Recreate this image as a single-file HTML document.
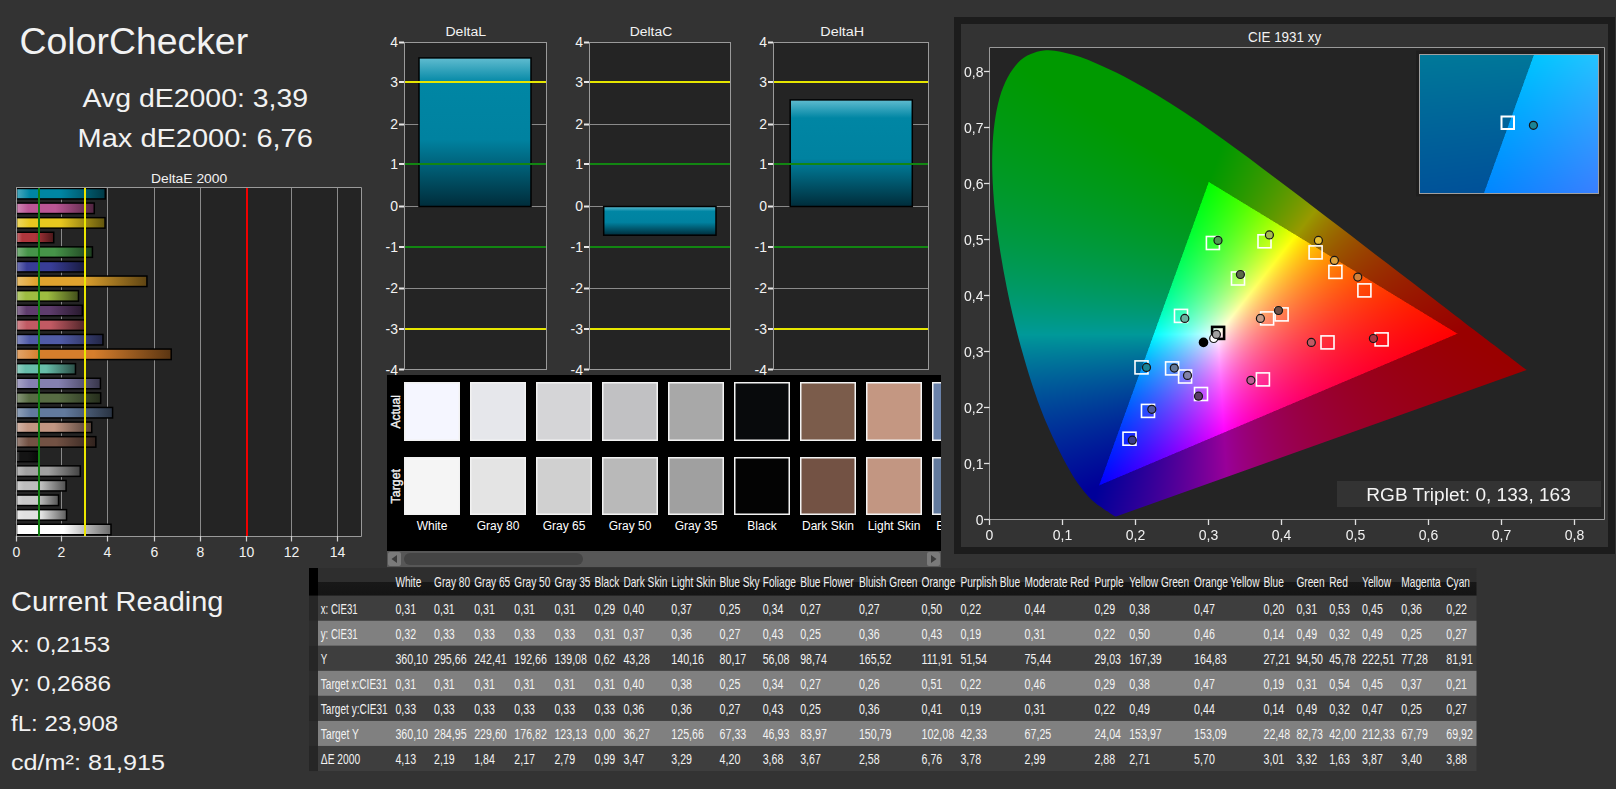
<!DOCTYPE html>
<html><head><meta charset="utf-8"><style>
html,body{margin:0;padding:0;width:1616px;height:789px;overflow:hidden;background:#333;}
svg{position:absolute;left:0;top:0;}
svg text{font-family:"Liberation Sans", sans-serif;}
canvas{position:absolute;}
</style></head><body>
<svg width="1616" height="789" viewBox="0 0 1616 789" style="z-index:0"><defs><linearGradient id="bg0" x1="0" y1="0" x2="1" y2="0"><stop offset="0" stop-color="#4caabf"/><stop offset="0.15" stop-color="#0085a3"/><stop offset="0.5" stop-color="#0085a3"/><stop offset="1" stop-color="#003844"/></linearGradient><linearGradient id="bg1" x1="0" y1="0" x2="1" y2="0"><stop offset="0" stop-color="#cf89b5"/><stop offset="0.15" stop-color="#bb5695"/><stop offset="0.5" stop-color="#bb5695"/><stop offset="1" stop-color="#4f243f"/></linearGradient><linearGradient id="bg2" x1="0" y1="0" x2="1" y2="0"><stop offset="0" stop-color="#eed862"/><stop offset="0.15" stop-color="#e7c71f"/><stop offset="0.5" stop-color="#e7c71f"/><stop offset="1" stop-color="#61540d"/></linearGradient><linearGradient id="bg3" x1="0" y1="0" x2="1" y2="0"><stop offset="0" stop-color="#c77276"/><stop offset="0.15" stop-color="#af363c"/><stop offset="0.5" stop-color="#af363c"/><stop offset="1" stop-color="#4a1719"/></linearGradient><linearGradient id="bg4" x1="0" y1="0" x2="1" y2="0"><stop offset="0" stop-color="#7eb480"/><stop offset="0.15" stop-color="#469449"/><stop offset="0.5" stop-color="#469449"/><stop offset="1" stop-color="#1d3e1f"/></linearGradient><linearGradient id="bg5" x1="0" y1="0" x2="1" y2="0"><stop offset="0" stop-color="#7477b6"/><stop offset="0.15" stop-color="#383d96"/><stop offset="0.5" stop-color="#383d96"/><stop offset="1" stop-color="#181a3f"/></linearGradient><linearGradient id="bg6" x1="0" y1="0" x2="1" y2="0"><stop offset="0" stop-color="#e9bf6d"/><stop offset="0.15" stop-color="#e0a32e"/><stop offset="0.5" stop-color="#e0a32e"/><stop offset="1" stop-color="#5e4413"/></linearGradient><linearGradient id="bg7" x1="0" y1="0" x2="1" y2="0"><stop offset="0" stop-color="#bad079"/><stop offset="0.15" stop-color="#9dbc40"/><stop offset="0.5" stop-color="#9dbc40"/><stop offset="1" stop-color="#424f1b"/></linearGradient><linearGradient id="bg8" x1="0" y1="0" x2="1" y2="0"><stop offset="0" stop-color="#8e7698"/><stop offset="0.15" stop-color="#5e3c6c"/><stop offset="0.5" stop-color="#5e3c6c"/><stop offset="1" stop-color="#27192d"/></linearGradient><linearGradient id="bg9" x1="0" y1="0" x2="1" y2="0"><stop offset="0" stop-color="#d48c92"/><stop offset="0.15" stop-color="#c15a63"/><stop offset="0.5" stop-color="#c15a63"/><stop offset="1" stop-color="#51262a"/></linearGradient><linearGradient id="bg10" x1="0" y1="0" x2="1" y2="0"><stop offset="0" stop-color="#848cc1"/><stop offset="0.15" stop-color="#505ba6"/><stop offset="0.5" stop-color="#505ba6"/><stop offset="1" stop-color="#222646"/></linearGradient><linearGradient id="bg11" x1="0" y1="0" x2="1" y2="0"><stop offset="0" stop-color="#e2a56b"/><stop offset="0.15" stop-color="#d67e2c"/><stop offset="0.5" stop-color="#d67e2c"/><stop offset="1" stop-color="#5a3512"/></linearGradient><linearGradient id="bg12" x1="0" y1="0" x2="1" y2="0"><stop offset="0" stop-color="#95d1c4"/><stop offset="0.15" stop-color="#67bdaa"/><stop offset="0.5" stop-color="#67bdaa"/><stop offset="1" stop-color="#2b4f47"/></linearGradient><linearGradient id="bg13" x1="0" y1="0" x2="1" y2="0"><stop offset="0" stop-color="#aaa6c8"/><stop offset="0.15" stop-color="#8580b1"/><stop offset="0.5" stop-color="#8580b1"/><stop offset="1" stop-color="#38364a"/></linearGradient><linearGradient id="bg14" x1="0" y1="0" x2="1" y2="0"><stop offset="0" stop-color="#89987b"/><stop offset="0.15" stop-color="#576c43"/><stop offset="0.5" stop-color="#576c43"/><stop offset="1" stop-color="#252d1c"/></linearGradient><linearGradient id="bg15" x1="0" y1="0" x2="1" y2="0"><stop offset="0" stop-color="#91a2ba"/><stop offset="0.15" stop-color="#627a9d"/><stop offset="0.5" stop-color="#627a9d"/><stop offset="1" stop-color="#293342"/></linearGradient><linearGradient id="bg16" x1="0" y1="0" x2="1" y2="0"><stop offset="0" stop-color="#d4b6a8"/><stop offset="0.15" stop-color="#c29682"/><stop offset="0.5" stop-color="#c29682"/><stop offset="1" stop-color="#513f37"/></linearGradient><linearGradient id="bg17" x1="0" y1="0" x2="1" y2="0"><stop offset="0" stop-color="#9d867c"/><stop offset="0.15" stop-color="#735244"/><stop offset="0.5" stop-color="#735244"/><stop offset="1" stop-color="#30221d"/></linearGradient><linearGradient id="bg18" x1="0" y1="0" x2="1" y2="0"><stop offset="0" stop-color="#5a5a5a"/><stop offset="0.15" stop-color="#141414"/><stop offset="0.5" stop-color="#141414"/><stop offset="1" stop-color="#080808"/></linearGradient><linearGradient id="bg19" x1="0" y1="0" x2="1" y2="0"><stop offset="0" stop-color="#bcbcbc"/><stop offset="0.15" stop-color="#a0a0a0"/><stop offset="0.5" stop-color="#a0a0a0"/><stop offset="1" stop-color="#434343"/></linearGradient><linearGradient id="bg20" x1="0" y1="0" x2="1" y2="0"><stop offset="0" stop-color="#d2d2d2"/><stop offset="0.15" stop-color="#bebebe"/><stop offset="0.5" stop-color="#bebebe"/><stop offset="1" stop-color="#505050"/></linearGradient><linearGradient id="bg21" x1="0" y1="0" x2="1" y2="0"><stop offset="0" stop-color="#d8d8d8"/><stop offset="0.15" stop-color="#c8c8c8"/><stop offset="0.5" stop-color="#c8c8c8"/><stop offset="1" stop-color="#545454"/></linearGradient><linearGradient id="bg22" x1="0" y1="0" x2="1" y2="0"><stop offset="0" stop-color="#eaeaea"/><stop offset="0.15" stop-color="#e1e1e1"/><stop offset="0.5" stop-color="#e1e1e1"/><stop offset="1" stop-color="#5e5e5e"/></linearGradient><linearGradient id="bg23" x1="0" y1="0" x2="1" y2="0"><stop offset="0" stop-color="#ffffff"/><stop offset="0.15" stop-color="#ffffff"/><stop offset="0.5" stop-color="#ffffff"/><stop offset="1" stop-color="#6b6b6b"/></linearGradient><linearGradient id="vbar" x1="0" y1="0" x2="0" y2="1"><stop offset="0" stop-color="#60bcd0"/><stop offset="0.17" stop-color="#0086a4"/><stop offset="0.55" stop-color="#0082a0"/><stop offset="1" stop-color="#002c3a"/></linearGradient><clipPath id="swclip"><rect x="387" y="375" width="554" height="176"/></clipPath><linearGradient id="hdr" x1="0" y1="0" x2="0" y2="1"><stop offset="0" stop-color="#2e2e2e"/><stop offset="0.5" stop-color="#2e2e2e"/><stop offset="0.5" stop-color="#181818"/><stop offset="1" stop-color="#141414"/></linearGradient><linearGradient id="fbg" x1="0" y1="0" x2="0" y2="1"><stop offset="0" stop-color="#009900"/><stop offset="0.45" stop-color="#009950"/><stop offset="0.6" stop-color="#009696"/><stop offset="0.8" stop-color="#003c99"/><stop offset="1" stop-color="#0a0099"/></linearGradient><linearGradient id="fbr" gradientUnits="userSpaceOnUse" x1="1230.7" y1="0" x2="1523.1" y2="0"><stop offset="0" stop-color="#990000" stop-opacity="0"/><stop offset="0.6" stop-color="#990000" stop-opacity="0.8"/><stop offset="1" stop-color="#990000" stop-opacity="1"/></linearGradient><linearGradient id="ftr" gradientUnits="userSpaceOnUse" x1="1457.3" y1="333.7" x2="1245.0" y2="333.7"><stop offset="0" stop-color="#ff0a0a" stop-opacity="1"/><stop offset="1" stop-color="#ff0a0a" stop-opacity="0"/></linearGradient><linearGradient id="ftg" gradientUnits="userSpaceOnUse" x1="1208.8" y1="182.0" x2="1257.4" y2="341.3"><stop offset="0" stop-color="#20ff00" stop-opacity="1"/><stop offset="1" stop-color="#20ff00" stop-opacity="0"/></linearGradient><linearGradient id="ftb" gradientUnits="userSpaceOnUse" x1="1099.2" y1="485.4" x2="1262.9" y2="326.1"><stop offset="0" stop-color="#0a20ff" stop-opacity="1"/><stop offset="1" stop-color="#0a20ff" stop-opacity="0"/></linearGradient></defs>
<rect x="0" y="0" width="1616" height="789" fill="#333333"/>
<text x="19.6" y="53.5" font-size="37" text-anchor="start" fill="#f2f2f2" textLength="228.5" lengthAdjust="spacingAndGlyphs">ColorChecker</text>
<text x="82.5" y="107.2" font-size="26.5" text-anchor="start" fill="#f2f2f2" textLength="225.6" lengthAdjust="spacingAndGlyphs">Avg dE2000: 3,39</text>
<text x="77.6" y="147.4" font-size="26.5" text-anchor="start" fill="#f2f2f2" textLength="235.2" lengthAdjust="spacingAndGlyphs">Max dE2000: 6,76</text>
<text x="11" y="611.3" font-size="27.4" text-anchor="start" fill="#f2f2f2" textLength="212.4" lengthAdjust="spacingAndGlyphs">Current Reading</text>
<text x="11" y="651.7" font-size="22" text-anchor="start" fill="#f2f2f2" textLength="99.2" lengthAdjust="spacingAndGlyphs">x: 0,2153</text>
<text x="11" y="691.4" font-size="22" text-anchor="start" fill="#f2f2f2" textLength="99.9" lengthAdjust="spacingAndGlyphs">y: 0,2686</text>
<text x="11" y="731.4" font-size="22" text-anchor="start" fill="#f2f2f2" textLength="107.2" lengthAdjust="spacingAndGlyphs">fL: 23,908</text>
<text x="11" y="770" font-size="22" text-anchor="start" fill="#f2f2f2" textLength="153.9" lengthAdjust="spacingAndGlyphs">cd/m²: 81,915</text>
<text x="151" y="182.9" font-size="13.7" text-anchor="start" fill="#f2f2f2" textLength="76.2" lengthAdjust="spacingAndGlyphs">DeltaE 2000</text>
<rect x="16.5" y="187.5" width="345" height="349" fill="#242424"/>
<line x1="61.5" y1="188" x2="61.5" y2="536" stroke="#8a8a8a" stroke-width="1"/>
<line x1="107.5" y1="188" x2="107.5" y2="536" stroke="#8a8a8a" stroke-width="1"/>
<line x1="154.5" y1="188" x2="154.5" y2="536" stroke="#8a8a8a" stroke-width="1"/>
<line x1="200.5" y1="188" x2="200.5" y2="536" stroke="#8a8a8a" stroke-width="1"/>
<line x1="291.5" y1="188" x2="291.5" y2="536" stroke="#8a8a8a" stroke-width="1"/>
<line x1="337.5" y1="188" x2="337.5" y2="536" stroke="#8a8a8a" stroke-width="1"/>
<rect x="16.5" y="188.45" width="88.75" height="10.5" fill="url(#bg0)" stroke="#000" stroke-width="1.5"/>
<rect x="16.5" y="203.05" width="77.76" height="10.5" fill="url(#bg1)" stroke="#000" stroke-width="1.5"/>
<rect x="16.5" y="217.65" width="88.52" height="10.5" fill="url(#bg2)" stroke="#000" stroke-width="1.5"/>
<rect x="16.5" y="232.25" width="37.23" height="10.5" fill="url(#bg3)" stroke="#000" stroke-width="1.5"/>
<rect x="16.5" y="246.85" width="75.93" height="10.5" fill="url(#bg4)" stroke="#000" stroke-width="1.5"/>
<rect x="16.5" y="261.45" width="68.83" height="10.5" fill="url(#bg5)" stroke="#000" stroke-width="1.5"/>
<rect x="16.5" y="276.05" width="130.43" height="10.5" fill="url(#bg6)" stroke="#000" stroke-width="1.5"/>
<rect x="16.5" y="290.65" width="61.96" height="10.5" fill="url(#bg7)" stroke="#000" stroke-width="1.5"/>
<rect x="16.5" y="305.25" width="65.85" height="10.5" fill="url(#bg8)" stroke="#000" stroke-width="1.5"/>
<rect x="16.5" y="319.85" width="68.37" height="10.5" fill="url(#bg9)" stroke="#000" stroke-width="1.5"/>
<rect x="16.5" y="334.45" width="86.46" height="10.5" fill="url(#bg10)" stroke="#000" stroke-width="1.5"/>
<rect x="16.5" y="349.05" width="154.70" height="10.5" fill="url(#bg11)" stroke="#000" stroke-width="1.5"/>
<rect x="16.5" y="363.65" width="58.98" height="10.5" fill="url(#bg12)" stroke="#000" stroke-width="1.5"/>
<rect x="16.5" y="378.25" width="83.94" height="10.5" fill="url(#bg13)" stroke="#000" stroke-width="1.5"/>
<rect x="16.5" y="392.85" width="84.17" height="10.5" fill="url(#bg14)" stroke="#000" stroke-width="1.5"/>
<rect x="16.5" y="407.45" width="96.08" height="10.5" fill="url(#bg15)" stroke="#000" stroke-width="1.5"/>
<rect x="16.5" y="422.05" width="75.24" height="10.5" fill="url(#bg16)" stroke="#000" stroke-width="1.5"/>
<rect x="16.5" y="436.65" width="79.36" height="10.5" fill="url(#bg17)" stroke="#000" stroke-width="1.5"/>
<rect x="16.5" y="451.25" width="22.57" height="10.5" fill="url(#bg18)" stroke="#000" stroke-width="1.5"/>
<rect x="16.5" y="465.85" width="63.79" height="10.5" fill="url(#bg19)" stroke="#000" stroke-width="1.5"/>
<rect x="16.5" y="480.45" width="49.59" height="10.5" fill="url(#bg20)" stroke="#000" stroke-width="1.5"/>
<rect x="16.5" y="495.05" width="42.04" height="10.5" fill="url(#bg21)" stroke="#000" stroke-width="1.5"/>
<rect x="16.5" y="509.65" width="50.05" height="10.5" fill="url(#bg22)" stroke="#000" stroke-width="1.5"/>
<rect x="16.5" y="524.25" width="94.48" height="10.5" fill="url(#bg23)" stroke="#000" stroke-width="1.5"/>
<path d="M16 187.5H361.5V536.5M16.5 187V541M16 536.5H361.5" fill="none" stroke="#9a9a9a" stroke-width="1"/>
<line x1="39" y1="188" x2="39" y2="536" stroke="#128012" stroke-width="2"/>
<line x1="85" y1="188" x2="85" y2="536" stroke="#ebe600" stroke-width="2"/>
<line x1="247" y1="188" x2="247" y2="536" stroke="#f00000" stroke-width="2"/>
<line x1="16.5" y1="536" x2="16.5" y2="541.5" stroke="#d0d0d0" stroke-width="1.2"/>
<text x="16.5" y="557" font-size="14" text-anchor="middle" fill="#f2f2f2">0</text>
<line x1="61.5" y1="536" x2="61.5" y2="541.5" stroke="#d0d0d0" stroke-width="1.2"/>
<text x="61.5" y="557" font-size="14" text-anchor="middle" fill="#f2f2f2">2</text>
<line x1="107.5" y1="536" x2="107.5" y2="541.5" stroke="#d0d0d0" stroke-width="1.2"/>
<text x="107.5" y="557" font-size="14" text-anchor="middle" fill="#f2f2f2">4</text>
<line x1="154.5" y1="536" x2="154.5" y2="541.5" stroke="#d0d0d0" stroke-width="1.2"/>
<text x="154.5" y="557" font-size="14" text-anchor="middle" fill="#f2f2f2">6</text>
<line x1="200.5" y1="536" x2="200.5" y2="541.5" stroke="#d0d0d0" stroke-width="1.2"/>
<text x="200.5" y="557" font-size="14" text-anchor="middle" fill="#f2f2f2">8</text>
<line x1="246.5" y1="536" x2="246.5" y2="541.5" stroke="#d0d0d0" stroke-width="1.2"/>
<text x="246.5" y="557" font-size="14" text-anchor="middle" fill="#f2f2f2">10</text>
<line x1="291.5" y1="536" x2="291.5" y2="541.5" stroke="#d0d0d0" stroke-width="1.2"/>
<text x="291.5" y="557" font-size="14" text-anchor="middle" fill="#f2f2f2">12</text>
<line x1="337.5" y1="536" x2="337.5" y2="541.5" stroke="#d0d0d0" stroke-width="1.2"/>
<text x="337.5" y="557" font-size="14" text-anchor="middle" fill="#f2f2f2">14</text>
<text x="445.40000000000003" y="36" font-size="13.7" text-anchor="start" fill="#f2f2f2" textLength="40.7" lengthAdjust="spacingAndGlyphs">DeltaL</text>
<rect x="404.5" y="42.5" width="142" height="327" fill="#242424"/>
<line x1="404" y1="124.5" x2="546" y2="124.5" stroke="#8a8a8a" stroke-width="1"/>
<line x1="404" y1="206.5" x2="546" y2="206.5" stroke="#8a8a8a" stroke-width="1"/>
<line x1="404" y1="288.5" x2="546" y2="288.5" stroke="#8a8a8a" stroke-width="1"/>
<rect x="419" y="57.9" width="112" height="148.6" fill="url(#vbar)" stroke="#000" stroke-width="1.5"/>
<line x1="404" y1="82" x2="546" y2="82" stroke="#e6e600" stroke-width="2"/>
<line x1="404" y1="164" x2="546" y2="164" stroke="#128612" stroke-width="2"/>
<line x1="404" y1="247" x2="546" y2="247" stroke="#128612" stroke-width="2"/>
<line x1="404" y1="329" x2="546" y2="329" stroke="#e6e600" stroke-width="2"/>
<rect x="404.5" y="42.5" width="142" height="327" fill="none" stroke="#9a9a9a" stroke-width="1"/>
<line x1="399" y1="369.5" x2="404" y2="369.5" stroke="#e8e8e8" stroke-width="2"/>
<text x="398" y="375" font-size="14" text-anchor="end" fill="#f2f2f2">-4</text>
<line x1="399" y1="329" x2="404" y2="329" stroke="#e8e8e8" stroke-width="2"/>
<text x="398" y="334" font-size="14" text-anchor="end" fill="#f2f2f2">-3</text>
<line x1="399" y1="288.5" x2="404" y2="288.5" stroke="#e8e8e8" stroke-width="2"/>
<text x="398" y="293" font-size="14" text-anchor="end" fill="#f2f2f2">-2</text>
<line x1="399" y1="247" x2="404" y2="247" stroke="#e8e8e8" stroke-width="2"/>
<text x="398" y="252" font-size="14" text-anchor="end" fill="#f2f2f2">-1</text>
<line x1="399" y1="206.5" x2="404" y2="206.5" stroke="#e8e8e8" stroke-width="2"/>
<text x="398" y="211" font-size="14" text-anchor="end" fill="#f2f2f2">0</text>
<line x1="399" y1="164" x2="404" y2="164" stroke="#e8e8e8" stroke-width="2"/>
<text x="398" y="169" font-size="14" text-anchor="end" fill="#f2f2f2">1</text>
<line x1="399" y1="124.5" x2="404" y2="124.5" stroke="#e8e8e8" stroke-width="2"/>
<text x="398" y="129" font-size="14" text-anchor="end" fill="#f2f2f2">2</text>
<line x1="399" y1="82" x2="404" y2="82" stroke="#e8e8e8" stroke-width="2"/>
<text x="398" y="87" font-size="14" text-anchor="end" fill="#f2f2f2">3</text>
<line x1="399" y1="42.5" x2="404" y2="42.5" stroke="#e8e8e8" stroke-width="2"/>
<text x="398" y="47" font-size="14" text-anchor="end" fill="#f2f2f2">4</text>
<text x="629.8" y="36" font-size="13.7" text-anchor="start" fill="#f2f2f2" textLength="42.4" lengthAdjust="spacingAndGlyphs">DeltaC</text>
<rect x="589.5" y="42.5" width="141" height="327" fill="#242424"/>
<line x1="589" y1="124.5" x2="730" y2="124.5" stroke="#8a8a8a" stroke-width="1"/>
<line x1="589" y1="206.5" x2="730" y2="206.5" stroke="#8a8a8a" stroke-width="1"/>
<line x1="589" y1="288.5" x2="730" y2="288.5" stroke="#8a8a8a" stroke-width="1"/>
<rect x="603.7" y="206.5" width="112.29999999999995" height="28.7" fill="url(#vbar)" stroke="#000" stroke-width="1.5"/>
<line x1="589" y1="82" x2="730" y2="82" stroke="#e6e600" stroke-width="2"/>
<line x1="589" y1="164" x2="730" y2="164" stroke="#128612" stroke-width="2"/>
<line x1="589" y1="247" x2="730" y2="247" stroke="#128612" stroke-width="2"/>
<line x1="589" y1="329" x2="730" y2="329" stroke="#e6e600" stroke-width="2"/>
<rect x="589.5" y="42.5" width="141" height="327" fill="none" stroke="#9a9a9a" stroke-width="1"/>
<line x1="584" y1="369.5" x2="589" y2="369.5" stroke="#e8e8e8" stroke-width="2"/>
<text x="583" y="375" font-size="14" text-anchor="end" fill="#f2f2f2">-4</text>
<line x1="584" y1="329" x2="589" y2="329" stroke="#e8e8e8" stroke-width="2"/>
<text x="583" y="334" font-size="14" text-anchor="end" fill="#f2f2f2">-3</text>
<line x1="584" y1="288.5" x2="589" y2="288.5" stroke="#e8e8e8" stroke-width="2"/>
<text x="583" y="293" font-size="14" text-anchor="end" fill="#f2f2f2">-2</text>
<line x1="584" y1="247" x2="589" y2="247" stroke="#e8e8e8" stroke-width="2"/>
<text x="583" y="252" font-size="14" text-anchor="end" fill="#f2f2f2">-1</text>
<line x1="584" y1="206.5" x2="589" y2="206.5" stroke="#e8e8e8" stroke-width="2"/>
<text x="583" y="211" font-size="14" text-anchor="end" fill="#f2f2f2">0</text>
<line x1="584" y1="164" x2="589" y2="164" stroke="#e8e8e8" stroke-width="2"/>
<text x="583" y="169" font-size="14" text-anchor="end" fill="#f2f2f2">1</text>
<line x1="584" y1="124.5" x2="589" y2="124.5" stroke="#e8e8e8" stroke-width="2"/>
<text x="583" y="129" font-size="14" text-anchor="end" fill="#f2f2f2">2</text>
<line x1="584" y1="82" x2="589" y2="82" stroke="#e8e8e8" stroke-width="2"/>
<text x="583" y="87" font-size="14" text-anchor="end" fill="#f2f2f2">3</text>
<line x1="584" y1="42.5" x2="589" y2="42.5" stroke="#e8e8e8" stroke-width="2"/>
<text x="583" y="47" font-size="14" text-anchor="end" fill="#f2f2f2">4</text>
<text x="820.3" y="36" font-size="13.7" text-anchor="start" fill="#f2f2f2" textLength="43.9" lengthAdjust="spacingAndGlyphs">DeltaH</text>
<rect x="773.5" y="42.5" width="155" height="327" fill="#242424"/>
<line x1="773" y1="124.5" x2="928" y2="124.5" stroke="#8a8a8a" stroke-width="1"/>
<line x1="773" y1="206.5" x2="928" y2="206.5" stroke="#8a8a8a" stroke-width="1"/>
<line x1="773" y1="288.5" x2="928" y2="288.5" stroke="#8a8a8a" stroke-width="1"/>
<rect x="790.2" y="99.9" width="122.09999999999991" height="106.6" fill="url(#vbar)" stroke="#000" stroke-width="1.5"/>
<line x1="773" y1="82" x2="928" y2="82" stroke="#e6e600" stroke-width="2"/>
<line x1="773" y1="164" x2="928" y2="164" stroke="#128612" stroke-width="2"/>
<line x1="773" y1="247" x2="928" y2="247" stroke="#128612" stroke-width="2"/>
<line x1="773" y1="329" x2="928" y2="329" stroke="#e6e600" stroke-width="2"/>
<rect x="773.5" y="42.5" width="155" height="327" fill="none" stroke="#9a9a9a" stroke-width="1"/>
<line x1="768" y1="369.5" x2="773" y2="369.5" stroke="#e8e8e8" stroke-width="2"/>
<text x="767" y="375" font-size="14" text-anchor="end" fill="#f2f2f2">-4</text>
<line x1="768" y1="329" x2="773" y2="329" stroke="#e8e8e8" stroke-width="2"/>
<text x="767" y="334" font-size="14" text-anchor="end" fill="#f2f2f2">-3</text>
<line x1="768" y1="288.5" x2="773" y2="288.5" stroke="#e8e8e8" stroke-width="2"/>
<text x="767" y="293" font-size="14" text-anchor="end" fill="#f2f2f2">-2</text>
<line x1="768" y1="247" x2="773" y2="247" stroke="#e8e8e8" stroke-width="2"/>
<text x="767" y="252" font-size="14" text-anchor="end" fill="#f2f2f2">-1</text>
<line x1="768" y1="206.5" x2="773" y2="206.5" stroke="#e8e8e8" stroke-width="2"/>
<text x="767" y="211" font-size="14" text-anchor="end" fill="#f2f2f2">0</text>
<line x1="768" y1="164" x2="773" y2="164" stroke="#e8e8e8" stroke-width="2"/>
<text x="767" y="169" font-size="14" text-anchor="end" fill="#f2f2f2">1</text>
<line x1="768" y1="124.5" x2="773" y2="124.5" stroke="#e8e8e8" stroke-width="2"/>
<text x="767" y="129" font-size="14" text-anchor="end" fill="#f2f2f2">2</text>
<line x1="768" y1="82" x2="773" y2="82" stroke="#e8e8e8" stroke-width="2"/>
<text x="767" y="87" font-size="14" text-anchor="end" fill="#f2f2f2">3</text>
<line x1="768" y1="42.5" x2="773" y2="42.5" stroke="#e8e8e8" stroke-width="2"/>
<text x="767" y="47" font-size="14" text-anchor="end" fill="#f2f2f2">4</text>
<rect x="387" y="375" width="554" height="176" fill="#000"/>
<g clip-path="url(#swclip)">
<rect x="404.75" y="382.75" width="54.5" height="57.5" fill="#f5f6ff" stroke="#f2f2f2" stroke-width="1.5"/>
<rect x="404.75" y="457.75" width="54.5" height="56.5" fill="#f5f5f5" stroke="#f2f2f2" stroke-width="1.5"/>
<text x="432" y="530" font-size="12" text-anchor="middle" fill="#ffffff">White</text>
<rect x="470.75" y="382.75" width="54.5" height="57.5" fill="#e6e7eb" stroke="#f2f2f2" stroke-width="1.5"/>
<rect x="470.75" y="457.75" width="54.5" height="56.5" fill="#e4e4e4" stroke="#f2f2f2" stroke-width="1.5"/>
<text x="498" y="530" font-size="12" text-anchor="middle" fill="#ffffff">Gray 80</text>
<rect x="536.75" y="382.75" width="54.5" height="57.5" fill="#d5d5d7" stroke="#f2f2f2" stroke-width="1.5"/>
<rect x="536.75" y="457.75" width="54.5" height="56.5" fill="#d0d0d0" stroke="#f2f2f2" stroke-width="1.5"/>
<text x="564" y="530" font-size="12" text-anchor="middle" fill="#ffffff">Gray 65</text>
<rect x="602.75" y="382.75" width="54.5" height="57.5" fill="#c1c1c3" stroke="#f2f2f2" stroke-width="1.5"/>
<rect x="602.75" y="457.75" width="54.5" height="56.5" fill="#b9b9b9" stroke="#f2f2f2" stroke-width="1.5"/>
<text x="630" y="530" font-size="12" text-anchor="middle" fill="#ffffff">Gray 50</text>
<rect x="668.75" y="382.75" width="54.5" height="57.5" fill="#a8a8a8" stroke="#f2f2f2" stroke-width="1.5"/>
<rect x="668.75" y="457.75" width="54.5" height="56.5" fill="#a0a0a0" stroke="#f2f2f2" stroke-width="1.5"/>
<text x="696" y="530" font-size="12" text-anchor="middle" fill="#ffffff">Gray 35</text>
<rect x="734.75" y="382.75" width="54.5" height="57.5" fill="#080a0c" stroke="#f2f2f2" stroke-width="1.5"/>
<rect x="734.75" y="457.75" width="54.5" height="56.5" fill="#030303" stroke="#f2f2f2" stroke-width="1.5"/>
<text x="762" y="530" font-size="12" text-anchor="middle" fill="#ffffff">Black</text>
<rect x="800.75" y="382.75" width="54.5" height="57.5" fill="#7b5c4b" stroke="#f2f2f2" stroke-width="1.5"/>
<rect x="800.75" y="457.75" width="54.5" height="56.5" fill="#735244" stroke="#f2f2f2" stroke-width="1.5"/>
<text x="828" y="530" font-size="12" text-anchor="middle" fill="#ffffff">Dark Skin</text>
<rect x="866.75" y="382.75" width="54.5" height="57.5" fill="#c49782" stroke="#f2f2f2" stroke-width="1.5"/>
<rect x="866.75" y="457.75" width="54.5" height="56.5" fill="#c29682" stroke="#f2f2f2" stroke-width="1.5"/>
<text x="894" y="530" font-size="12" text-anchor="middle" fill="#ffffff">Light Skin</text>
<rect x="932.75" y="382.75" width="54.5" height="57.5" fill="#6a82aa" stroke="#f2f2f2" stroke-width="1.5"/>
<rect x="932.75" y="457.75" width="54.5" height="56.5" fill="#627a9d" stroke="#f2f2f2" stroke-width="1.5"/>
<text x="960" y="530" font-size="12" text-anchor="middle" fill="#ffffff">Blue Sky</text>
</g>
<text transform="translate(399.8,428.6) rotate(-90)" font-size="12.4" fill="#f4f4f4" stroke="#f4f4f4" stroke-width="0.35" textLength="33.6" lengthAdjust="spacingAndGlyphs">Actual</text>
<text transform="translate(399.8,503.4) rotate(-90)" font-size="12.4" fill="#f4f4f4" stroke="#f4f4f4" stroke-width="0.35" textLength="34.4" lengthAdjust="spacingAndGlyphs">Target</text>
<rect x="387" y="551" width="554" height="16" fill="#575757"/>
<rect x="388" y="552" width="13" height="14" rx="2" fill="#7a7a7a"/>
<path d="M391.5 559 L397 555 V563 Z" fill="#3c3c3c"/>
<rect x="927" y="552" width="13" height="14" rx="2" fill="#7a7a7a"/>
<path d="M936.5 559 L931 555 V563 Z" fill="#3c3c3c"/>
<rect x="404" y="553" width="179" height="12" rx="6" fill="#444444"/>
<rect x="309" y="568" width="1167.5" height="27.7" fill="url(#hdr)"/>
<rect x="309" y="568" width="9" height="27.7" fill="#000"/>
<text transform="translate(395.4,587) scale(0.73,1)" font-size="13.9" fill="#f2f2f2">White</text>
<text transform="translate(434,587) scale(0.73,1)" font-size="13.9" fill="#f2f2f2">Gray 80</text>
<text transform="translate(474.2,587) scale(0.73,1)" font-size="13.9" fill="#f2f2f2">Gray 65</text>
<text transform="translate(514.3,587) scale(0.73,1)" font-size="13.9" fill="#f2f2f2">Gray 50</text>
<text transform="translate(554.4,587) scale(0.73,1)" font-size="13.9" fill="#f2f2f2">Gray 35</text>
<text transform="translate(594.5,587) scale(0.73,1)" font-size="13.9" fill="#f2f2f2">Black</text>
<text transform="translate(623.4,587) scale(0.73,1)" font-size="13.9" fill="#f2f2f2">Dark Skin</text>
<text transform="translate(671.3,587) scale(0.73,1)" font-size="13.9" fill="#f2f2f2">Light Skin</text>
<text transform="translate(719.6,587) scale(0.73,1)" font-size="13.9" fill="#f2f2f2">Blue Sky</text>
<text transform="translate(762.7,587) scale(0.73,1)" font-size="13.9" fill="#f2f2f2">Foliage</text>
<text transform="translate(800.2,587) scale(0.73,1)" font-size="13.9" fill="#f2f2f2">Blue Flower</text>
<text transform="translate(858.9,587) scale(0.73,1)" font-size="13.9" fill="#f2f2f2">Bluish Green</text>
<text transform="translate(921.5,587) scale(0.73,1)" font-size="13.9" fill="#f2f2f2">Orange</text>
<text transform="translate(960.4,587) scale(0.73,1)" font-size="13.9" fill="#f2f2f2">Purplish Blue</text>
<text transform="translate(1024.6,587) scale(0.73,1)" font-size="13.9" fill="#f2f2f2">Moderate Red</text>
<text transform="translate(1094.4,587) scale(0.73,1)" font-size="13.9" fill="#f2f2f2">Purple</text>
<text transform="translate(1129.2,587) scale(0.73,1)" font-size="13.9" fill="#f2f2f2">Yellow Green</text>
<text transform="translate(1194.1,587) scale(0.73,1)" font-size="13.9" fill="#f2f2f2">Orange Yellow</text>
<text transform="translate(1263.5,587) scale(0.73,1)" font-size="13.9" fill="#f2f2f2">Blue</text>
<text transform="translate(1296.4,587) scale(0.73,1)" font-size="13.9" fill="#f2f2f2">Green</text>
<text transform="translate(1329.2,587) scale(0.73,1)" font-size="13.9" fill="#f2f2f2">Red</text>
<text transform="translate(1362.1,587) scale(0.73,1)" font-size="13.9" fill="#f2f2f2">Yellow</text>
<text transform="translate(1401.3,587) scale(0.73,1)" font-size="13.9" fill="#f2f2f2">Magenta</text>
<text transform="translate(1446.3,587) scale(0.73,1)" font-size="13.9" fill="#f2f2f2">Cyan</text>
<rect x="318" y="595.70" width="1158.5" height="25.1" fill="#3e3e3e"/>
<rect x="309" y="595.70" width="9" height="25.1" fill="#262626"/>
<text x="320.8" y="614.0" font-size="15" text-anchor="start" fill="#f2f2f2" textLength="36.8" lengthAdjust="spacingAndGlyphs">x: CIE31</text>
<text transform="translate(395.4,614.0) scale(0.71,1)" font-size="15" fill="#f2f2f2">0,31</text>
<text transform="translate(434,614.0) scale(0.71,1)" font-size="15" fill="#f2f2f2">0,31</text>
<text transform="translate(474.2,614.0) scale(0.71,1)" font-size="15" fill="#f2f2f2">0,31</text>
<text transform="translate(514.3,614.0) scale(0.71,1)" font-size="15" fill="#f2f2f2">0,31</text>
<text transform="translate(554.4,614.0) scale(0.71,1)" font-size="15" fill="#f2f2f2">0,31</text>
<text transform="translate(594.5,614.0) scale(0.71,1)" font-size="15" fill="#f2f2f2">0,29</text>
<text transform="translate(623.4,614.0) scale(0.71,1)" font-size="15" fill="#f2f2f2">0,40</text>
<text transform="translate(671.3,614.0) scale(0.71,1)" font-size="15" fill="#f2f2f2">0,37</text>
<text transform="translate(719.6,614.0) scale(0.71,1)" font-size="15" fill="#f2f2f2">0,25</text>
<text transform="translate(762.7,614.0) scale(0.71,1)" font-size="15" fill="#f2f2f2">0,34</text>
<text transform="translate(800.2,614.0) scale(0.71,1)" font-size="15" fill="#f2f2f2">0,27</text>
<text transform="translate(858.9,614.0) scale(0.71,1)" font-size="15" fill="#f2f2f2">0,27</text>
<text transform="translate(921.5,614.0) scale(0.71,1)" font-size="15" fill="#f2f2f2">0,50</text>
<text transform="translate(960.4,614.0) scale(0.71,1)" font-size="15" fill="#f2f2f2">0,22</text>
<text transform="translate(1024.6,614.0) scale(0.71,1)" font-size="15" fill="#f2f2f2">0,44</text>
<text transform="translate(1094.4,614.0) scale(0.71,1)" font-size="15" fill="#f2f2f2">0,29</text>
<text transform="translate(1129.2,614.0) scale(0.71,1)" font-size="15" fill="#f2f2f2">0,38</text>
<text transform="translate(1194.1,614.0) scale(0.71,1)" font-size="15" fill="#f2f2f2">0,47</text>
<text transform="translate(1263.5,614.0) scale(0.71,1)" font-size="15" fill="#f2f2f2">0,20</text>
<text transform="translate(1296.4,614.0) scale(0.71,1)" font-size="15" fill="#f2f2f2">0,31</text>
<text transform="translate(1329.2,614.0) scale(0.71,1)" font-size="15" fill="#f2f2f2">0,53</text>
<text transform="translate(1362.1,614.0) scale(0.71,1)" font-size="15" fill="#f2f2f2">0,45</text>
<text transform="translate(1401.3,614.0) scale(0.71,1)" font-size="15" fill="#f2f2f2">0,36</text>
<text transform="translate(1446.3,614.0) scale(0.71,1)" font-size="15" fill="#f2f2f2">0,22</text>
<rect x="318" y="620.74" width="1158.5" height="25.1" fill="#808080"/>
<rect x="309" y="620.74" width="9" height="25.1" fill="#2c2c2c"/>
<text x="320.8" y="639.04" font-size="15" text-anchor="start" fill="#f2f2f2" textLength="36.8" lengthAdjust="spacingAndGlyphs">y: CIE31</text>
<text transform="translate(395.4,639.04) scale(0.71,1)" font-size="15" fill="#f2f2f2">0,32</text>
<text transform="translate(434,639.04) scale(0.71,1)" font-size="15" fill="#f2f2f2">0,33</text>
<text transform="translate(474.2,639.04) scale(0.71,1)" font-size="15" fill="#f2f2f2">0,33</text>
<text transform="translate(514.3,639.04) scale(0.71,1)" font-size="15" fill="#f2f2f2">0,33</text>
<text transform="translate(554.4,639.04) scale(0.71,1)" font-size="15" fill="#f2f2f2">0,33</text>
<text transform="translate(594.5,639.04) scale(0.71,1)" font-size="15" fill="#f2f2f2">0,31</text>
<text transform="translate(623.4,639.04) scale(0.71,1)" font-size="15" fill="#f2f2f2">0,37</text>
<text transform="translate(671.3,639.04) scale(0.71,1)" font-size="15" fill="#f2f2f2">0,36</text>
<text transform="translate(719.6,639.04) scale(0.71,1)" font-size="15" fill="#f2f2f2">0,27</text>
<text transform="translate(762.7,639.04) scale(0.71,1)" font-size="15" fill="#f2f2f2">0,43</text>
<text transform="translate(800.2,639.04) scale(0.71,1)" font-size="15" fill="#f2f2f2">0,25</text>
<text transform="translate(858.9,639.04) scale(0.71,1)" font-size="15" fill="#f2f2f2">0,36</text>
<text transform="translate(921.5,639.04) scale(0.71,1)" font-size="15" fill="#f2f2f2">0,43</text>
<text transform="translate(960.4,639.04) scale(0.71,1)" font-size="15" fill="#f2f2f2">0,19</text>
<text transform="translate(1024.6,639.04) scale(0.71,1)" font-size="15" fill="#f2f2f2">0,31</text>
<text transform="translate(1094.4,639.04) scale(0.71,1)" font-size="15" fill="#f2f2f2">0,22</text>
<text transform="translate(1129.2,639.04) scale(0.71,1)" font-size="15" fill="#f2f2f2">0,50</text>
<text transform="translate(1194.1,639.04) scale(0.71,1)" font-size="15" fill="#f2f2f2">0,46</text>
<text transform="translate(1263.5,639.04) scale(0.71,1)" font-size="15" fill="#f2f2f2">0,14</text>
<text transform="translate(1296.4,639.04) scale(0.71,1)" font-size="15" fill="#f2f2f2">0,49</text>
<text transform="translate(1329.2,639.04) scale(0.71,1)" font-size="15" fill="#f2f2f2">0,32</text>
<text transform="translate(1362.1,639.04) scale(0.71,1)" font-size="15" fill="#f2f2f2">0,49</text>
<text transform="translate(1401.3,639.04) scale(0.71,1)" font-size="15" fill="#f2f2f2">0,25</text>
<text transform="translate(1446.3,639.04) scale(0.71,1)" font-size="15" fill="#f2f2f2">0,27</text>
<rect x="318" y="645.78" width="1158.5" height="25.1" fill="#3e3e3e"/>
<rect x="309" y="645.78" width="9" height="25.1" fill="#262626"/>
<text x="320.8" y="664.08" font-size="15" text-anchor="start" fill="#f2f2f2" textLength="6.5" lengthAdjust="spacingAndGlyphs">Y</text>
<text transform="translate(395.4,664.08) scale(0.71,1)" font-size="15" fill="#f2f2f2">360,10</text>
<text transform="translate(434,664.08) scale(0.71,1)" font-size="15" fill="#f2f2f2">295,66</text>
<text transform="translate(474.2,664.08) scale(0.71,1)" font-size="15" fill="#f2f2f2">242,41</text>
<text transform="translate(514.3,664.08) scale(0.71,1)" font-size="15" fill="#f2f2f2">192,66</text>
<text transform="translate(554.4,664.08) scale(0.71,1)" font-size="15" fill="#f2f2f2">139,08</text>
<text transform="translate(594.5,664.08) scale(0.71,1)" font-size="15" fill="#f2f2f2">0,62</text>
<text transform="translate(623.4,664.08) scale(0.71,1)" font-size="15" fill="#f2f2f2">43,28</text>
<text transform="translate(671.3,664.08) scale(0.71,1)" font-size="15" fill="#f2f2f2">140,16</text>
<text transform="translate(719.6,664.08) scale(0.71,1)" font-size="15" fill="#f2f2f2">80,17</text>
<text transform="translate(762.7,664.08) scale(0.71,1)" font-size="15" fill="#f2f2f2">56,08</text>
<text transform="translate(800.2,664.08) scale(0.71,1)" font-size="15" fill="#f2f2f2">98,74</text>
<text transform="translate(858.9,664.08) scale(0.71,1)" font-size="15" fill="#f2f2f2">165,52</text>
<text transform="translate(921.5,664.08) scale(0.71,1)" font-size="15" fill="#f2f2f2">111,91</text>
<text transform="translate(960.4,664.08) scale(0.71,1)" font-size="15" fill="#f2f2f2">51,54</text>
<text transform="translate(1024.6,664.08) scale(0.71,1)" font-size="15" fill="#f2f2f2">75,44</text>
<text transform="translate(1094.4,664.08) scale(0.71,1)" font-size="15" fill="#f2f2f2">29,03</text>
<text transform="translate(1129.2,664.08) scale(0.71,1)" font-size="15" fill="#f2f2f2">167,39</text>
<text transform="translate(1194.1,664.08) scale(0.71,1)" font-size="15" fill="#f2f2f2">164,83</text>
<text transform="translate(1263.5,664.08) scale(0.71,1)" font-size="15" fill="#f2f2f2">27,21</text>
<text transform="translate(1296.4,664.08) scale(0.71,1)" font-size="15" fill="#f2f2f2">94,50</text>
<text transform="translate(1329.2,664.08) scale(0.71,1)" font-size="15" fill="#f2f2f2">45,78</text>
<text transform="translate(1362.1,664.08) scale(0.71,1)" font-size="15" fill="#f2f2f2">222,51</text>
<text transform="translate(1401.3,664.08) scale(0.71,1)" font-size="15" fill="#f2f2f2">77,28</text>
<text transform="translate(1446.3,664.08) scale(0.71,1)" font-size="15" fill="#f2f2f2">81,91</text>
<rect x="318" y="670.82" width="1158.5" height="25.1" fill="#808080"/>
<rect x="309" y="670.82" width="9" height="25.1" fill="#2c2c2c"/>
<text x="320.8" y="689.12" font-size="15" text-anchor="start" fill="#f2f2f2" textLength="66.5" lengthAdjust="spacingAndGlyphs">Target x:CIE31</text>
<text transform="translate(395.4,689.12) scale(0.71,1)" font-size="15" fill="#f2f2f2">0,31</text>
<text transform="translate(434,689.12) scale(0.71,1)" font-size="15" fill="#f2f2f2">0,31</text>
<text transform="translate(474.2,689.12) scale(0.71,1)" font-size="15" fill="#f2f2f2">0,31</text>
<text transform="translate(514.3,689.12) scale(0.71,1)" font-size="15" fill="#f2f2f2">0,31</text>
<text transform="translate(554.4,689.12) scale(0.71,1)" font-size="15" fill="#f2f2f2">0,31</text>
<text transform="translate(594.5,689.12) scale(0.71,1)" font-size="15" fill="#f2f2f2">0,31</text>
<text transform="translate(623.4,689.12) scale(0.71,1)" font-size="15" fill="#f2f2f2">0,40</text>
<text transform="translate(671.3,689.12) scale(0.71,1)" font-size="15" fill="#f2f2f2">0,38</text>
<text transform="translate(719.6,689.12) scale(0.71,1)" font-size="15" fill="#f2f2f2">0,25</text>
<text transform="translate(762.7,689.12) scale(0.71,1)" font-size="15" fill="#f2f2f2">0,34</text>
<text transform="translate(800.2,689.12) scale(0.71,1)" font-size="15" fill="#f2f2f2">0,27</text>
<text transform="translate(858.9,689.12) scale(0.71,1)" font-size="15" fill="#f2f2f2">0,26</text>
<text transform="translate(921.5,689.12) scale(0.71,1)" font-size="15" fill="#f2f2f2">0,51</text>
<text transform="translate(960.4,689.12) scale(0.71,1)" font-size="15" fill="#f2f2f2">0,22</text>
<text transform="translate(1024.6,689.12) scale(0.71,1)" font-size="15" fill="#f2f2f2">0,46</text>
<text transform="translate(1094.4,689.12) scale(0.71,1)" font-size="15" fill="#f2f2f2">0,29</text>
<text transform="translate(1129.2,689.12) scale(0.71,1)" font-size="15" fill="#f2f2f2">0,38</text>
<text transform="translate(1194.1,689.12) scale(0.71,1)" font-size="15" fill="#f2f2f2">0,47</text>
<text transform="translate(1263.5,689.12) scale(0.71,1)" font-size="15" fill="#f2f2f2">0,19</text>
<text transform="translate(1296.4,689.12) scale(0.71,1)" font-size="15" fill="#f2f2f2">0,31</text>
<text transform="translate(1329.2,689.12) scale(0.71,1)" font-size="15" fill="#f2f2f2">0,54</text>
<text transform="translate(1362.1,689.12) scale(0.71,1)" font-size="15" fill="#f2f2f2">0,45</text>
<text transform="translate(1401.3,689.12) scale(0.71,1)" font-size="15" fill="#f2f2f2">0,37</text>
<text transform="translate(1446.3,689.12) scale(0.71,1)" font-size="15" fill="#f2f2f2">0,21</text>
<rect x="318" y="695.86" width="1158.5" height="25.1" fill="#3e3e3e"/>
<rect x="309" y="695.86" width="9" height="25.1" fill="#262626"/>
<text x="320.8" y="714.16" font-size="15" text-anchor="start" fill="#f2f2f2" textLength="66.9" lengthAdjust="spacingAndGlyphs">Target y:CIE31</text>
<text transform="translate(395.4,714.16) scale(0.71,1)" font-size="15" fill="#f2f2f2">0,33</text>
<text transform="translate(434,714.16) scale(0.71,1)" font-size="15" fill="#f2f2f2">0,33</text>
<text transform="translate(474.2,714.16) scale(0.71,1)" font-size="15" fill="#f2f2f2">0,33</text>
<text transform="translate(514.3,714.16) scale(0.71,1)" font-size="15" fill="#f2f2f2">0,33</text>
<text transform="translate(554.4,714.16) scale(0.71,1)" font-size="15" fill="#f2f2f2">0,33</text>
<text transform="translate(594.5,714.16) scale(0.71,1)" font-size="15" fill="#f2f2f2">0,33</text>
<text transform="translate(623.4,714.16) scale(0.71,1)" font-size="15" fill="#f2f2f2">0,36</text>
<text transform="translate(671.3,714.16) scale(0.71,1)" font-size="15" fill="#f2f2f2">0,36</text>
<text transform="translate(719.6,714.16) scale(0.71,1)" font-size="15" fill="#f2f2f2">0,27</text>
<text transform="translate(762.7,714.16) scale(0.71,1)" font-size="15" fill="#f2f2f2">0,43</text>
<text transform="translate(800.2,714.16) scale(0.71,1)" font-size="15" fill="#f2f2f2">0,25</text>
<text transform="translate(858.9,714.16) scale(0.71,1)" font-size="15" fill="#f2f2f2">0,36</text>
<text transform="translate(921.5,714.16) scale(0.71,1)" font-size="15" fill="#f2f2f2">0,41</text>
<text transform="translate(960.4,714.16) scale(0.71,1)" font-size="15" fill="#f2f2f2">0,19</text>
<text transform="translate(1024.6,714.16) scale(0.71,1)" font-size="15" fill="#f2f2f2">0,31</text>
<text transform="translate(1094.4,714.16) scale(0.71,1)" font-size="15" fill="#f2f2f2">0,22</text>
<text transform="translate(1129.2,714.16) scale(0.71,1)" font-size="15" fill="#f2f2f2">0,49</text>
<text transform="translate(1194.1,714.16) scale(0.71,1)" font-size="15" fill="#f2f2f2">0,44</text>
<text transform="translate(1263.5,714.16) scale(0.71,1)" font-size="15" fill="#f2f2f2">0,14</text>
<text transform="translate(1296.4,714.16) scale(0.71,1)" font-size="15" fill="#f2f2f2">0,49</text>
<text transform="translate(1329.2,714.16) scale(0.71,1)" font-size="15" fill="#f2f2f2">0,32</text>
<text transform="translate(1362.1,714.16) scale(0.71,1)" font-size="15" fill="#f2f2f2">0,47</text>
<text transform="translate(1401.3,714.16) scale(0.71,1)" font-size="15" fill="#f2f2f2">0,25</text>
<text transform="translate(1446.3,714.16) scale(0.71,1)" font-size="15" fill="#f2f2f2">0,27</text>
<rect x="318" y="720.90" width="1158.5" height="25.1" fill="#808080"/>
<rect x="309" y="720.90" width="9" height="25.1" fill="#2c2c2c"/>
<text x="320.8" y="739.2" font-size="15" text-anchor="start" fill="#f2f2f2" textLength="38" lengthAdjust="spacingAndGlyphs">Target Y</text>
<text transform="translate(395.4,739.2) scale(0.71,1)" font-size="15" fill="#f2f2f2">360,10</text>
<text transform="translate(434,739.2) scale(0.71,1)" font-size="15" fill="#f2f2f2">284,95</text>
<text transform="translate(474.2,739.2) scale(0.71,1)" font-size="15" fill="#f2f2f2">229,60</text>
<text transform="translate(514.3,739.2) scale(0.71,1)" font-size="15" fill="#f2f2f2">176,82</text>
<text transform="translate(554.4,739.2) scale(0.71,1)" font-size="15" fill="#f2f2f2">123,13</text>
<text transform="translate(594.5,739.2) scale(0.71,1)" font-size="15" fill="#f2f2f2">0,00</text>
<text transform="translate(623.4,739.2) scale(0.71,1)" font-size="15" fill="#f2f2f2">36,27</text>
<text transform="translate(671.3,739.2) scale(0.71,1)" font-size="15" fill="#f2f2f2">125,66</text>
<text transform="translate(719.6,739.2) scale(0.71,1)" font-size="15" fill="#f2f2f2">67,33</text>
<text transform="translate(762.7,739.2) scale(0.71,1)" font-size="15" fill="#f2f2f2">46,93</text>
<text transform="translate(800.2,739.2) scale(0.71,1)" font-size="15" fill="#f2f2f2">83,97</text>
<text transform="translate(858.9,739.2) scale(0.71,1)" font-size="15" fill="#f2f2f2">150,79</text>
<text transform="translate(921.5,739.2) scale(0.71,1)" font-size="15" fill="#f2f2f2">102,08</text>
<text transform="translate(960.4,739.2) scale(0.71,1)" font-size="15" fill="#f2f2f2">42,33</text>
<text transform="translate(1024.6,739.2) scale(0.71,1)" font-size="15" fill="#f2f2f2">67,25</text>
<text transform="translate(1094.4,739.2) scale(0.71,1)" font-size="15" fill="#f2f2f2">24,04</text>
<text transform="translate(1129.2,739.2) scale(0.71,1)" font-size="15" fill="#f2f2f2">153,97</text>
<text transform="translate(1194.1,739.2) scale(0.71,1)" font-size="15" fill="#f2f2f2">153,09</text>
<text transform="translate(1263.5,739.2) scale(0.71,1)" font-size="15" fill="#f2f2f2">22,48</text>
<text transform="translate(1296.4,739.2) scale(0.71,1)" font-size="15" fill="#f2f2f2">82,73</text>
<text transform="translate(1329.2,739.2) scale(0.71,1)" font-size="15" fill="#f2f2f2">42,00</text>
<text transform="translate(1362.1,739.2) scale(0.71,1)" font-size="15" fill="#f2f2f2">212,33</text>
<text transform="translate(1401.3,739.2) scale(0.71,1)" font-size="15" fill="#f2f2f2">67,79</text>
<text transform="translate(1446.3,739.2) scale(0.71,1)" font-size="15" fill="#f2f2f2">69,92</text>
<rect x="318" y="745.94" width="1158.5" height="25.1" fill="#3e3e3e"/>
<rect x="309" y="745.94" width="9" height="25.1" fill="#262626"/>
<text x="320.8" y="764.24" font-size="15" text-anchor="start" fill="#f2f2f2" textLength="39.4" lengthAdjust="spacingAndGlyphs">ΔE 2000</text>
<text transform="translate(395.4,764.24) scale(0.71,1)" font-size="15" fill="#f2f2f2">4,13</text>
<text transform="translate(434,764.24) scale(0.71,1)" font-size="15" fill="#f2f2f2">2,19</text>
<text transform="translate(474.2,764.24) scale(0.71,1)" font-size="15" fill="#f2f2f2">1,84</text>
<text transform="translate(514.3,764.24) scale(0.71,1)" font-size="15" fill="#f2f2f2">2,17</text>
<text transform="translate(554.4,764.24) scale(0.71,1)" font-size="15" fill="#f2f2f2">2,79</text>
<text transform="translate(594.5,764.24) scale(0.71,1)" font-size="15" fill="#f2f2f2">0,99</text>
<text transform="translate(623.4,764.24) scale(0.71,1)" font-size="15" fill="#f2f2f2">3,47</text>
<text transform="translate(671.3,764.24) scale(0.71,1)" font-size="15" fill="#f2f2f2">3,29</text>
<text transform="translate(719.6,764.24) scale(0.71,1)" font-size="15" fill="#f2f2f2">4,20</text>
<text transform="translate(762.7,764.24) scale(0.71,1)" font-size="15" fill="#f2f2f2">3,68</text>
<text transform="translate(800.2,764.24) scale(0.71,1)" font-size="15" fill="#f2f2f2">3,67</text>
<text transform="translate(858.9,764.24) scale(0.71,1)" font-size="15" fill="#f2f2f2">2,58</text>
<text transform="translate(921.5,764.24) scale(0.71,1)" font-size="15" fill="#f2f2f2">6,76</text>
<text transform="translate(960.4,764.24) scale(0.71,1)" font-size="15" fill="#f2f2f2">3,78</text>
<text transform="translate(1024.6,764.24) scale(0.71,1)" font-size="15" fill="#f2f2f2">2,99</text>
<text transform="translate(1094.4,764.24) scale(0.71,1)" font-size="15" fill="#f2f2f2">2,88</text>
<text transform="translate(1129.2,764.24) scale(0.71,1)" font-size="15" fill="#f2f2f2">2,71</text>
<text transform="translate(1194.1,764.24) scale(0.71,1)" font-size="15" fill="#f2f2f2">5,70</text>
<text transform="translate(1263.5,764.24) scale(0.71,1)" font-size="15" fill="#f2f2f2">3,01</text>
<text transform="translate(1296.4,764.24) scale(0.71,1)" font-size="15" fill="#f2f2f2">3,32</text>
<text transform="translate(1329.2,764.24) scale(0.71,1)" font-size="15" fill="#f2f2f2">1,63</text>
<text transform="translate(1362.1,764.24) scale(0.71,1)" font-size="15" fill="#f2f2f2">3,87</text>
<text transform="translate(1401.3,764.24) scale(0.71,1)" font-size="15" fill="#f2f2f2">3,40</text>
<text transform="translate(1446.3,764.24) scale(0.71,1)" font-size="15" fill="#f2f2f2">3,88</text>
<rect x="954" y="17" width="661" height="537" fill="#1c1c1c"/>
<rect x="961" y="24" width="647" height="523" fill="#333333"/>
<text x="1248" y="42.1" font-size="14" text-anchor="start" fill="#f2f2f2" textLength="73.2" lengthAdjust="spacingAndGlyphs">CIE 1931 xy</text>
<rect x="989.5" y="47.5" width="615" height="472" fill="#242424"/>
<g id="fb"><path d="M1116.77 516.29 C1116.75 516.29 1116.73 516.28 1116.69 516.29 C1116.66 516.30 1116.60 516.34 1116.55 516.35 C1116.50 516.36 1116.46 516.34 1116.40 516.35 C1116.34 516.36 1116.26 516.39 1116.18 516.40 C1116.11 516.41 1116.05 516.40 1115.96 516.40 C1115.88 516.40 1115.78 516.40 1115.67 516.40 C1115.56 516.40 1115.45 516.43 1115.31 516.40 C1115.16 516.37 1115.01 516.33 1114.79 516.23 C1114.57 516.14 1114.29 516.01 1113.99 515.84 C1113.68 515.67 1113.38 515.49 1112.97 515.22 C1112.55 514.96 1112.05 514.64 1111.50 514.27 C1110.96 513.89 1110.38 513.46 1109.68 512.98 C1108.97 512.49 1108.21 511.98 1107.26 511.35 C1106.31 510.71 1105.21 509.99 1103.97 509.15 C1102.74 508.32 1101.42 507.47 1099.88 506.34 C1098.35 505.22 1096.65 504.02 1094.76 502.41 C1092.88 500.80 1090.97 499.31 1088.55 496.68 C1086.13 494.05 1083.37 491.01 1080.22 486.62 C1077.06 482.23 1073.61 477.34 1069.62 470.33 C1065.62 463.31 1061.22 455.20 1056.24 444.54 C1051.26 433.87 1045.31 421.53 1039.72 406.33 C1034.13 391.13 1028.19 373.19 1022.69 353.34 C1017.18 333.49 1011.21 310.00 1006.68 287.20 C1002.15 264.41 997.88 239.25 995.49 216.57 C993.11 193.90 991.66 171.00 992.35 151.17 C993.05 131.33 995.40 112.28 999.66 97.56 C1003.93 82.84 1010.58 70.67 1017.94 62.84 C1025.29 55.01 1034.64 51.92 1043.81 50.59 C1052.99 49.26 1063.18 52.25 1072.98 54.86 C1082.78 57.47 1093.00 62.09 1102.59 66.26 C1112.17 70.44 1121.38 75.09 1130.51 79.92 C1139.64 84.75 1148.46 89.89 1157.34 95.26 C1166.22 100.62 1175.03 106.31 1183.80 112.12 C1192.57 117.92 1201.26 123.97 1209.97 130.10 C1218.68 136.22 1227.36 142.51 1236.07 148.86 C1244.78 155.21 1253.54 161.70 1262.24 168.19 C1270.94 174.68 1279.61 181.27 1288.26 187.80 C1296.91 194.34 1305.60 200.91 1314.14 207.41 C1322.68 213.91 1331.17 220.42 1339.50 226.80 C1347.84 233.18 1356.10 239.52 1364.14 245.68 C1372.18 251.84 1380.11 257.93 1387.75 263.77 C1395.39 269.62 1402.89 275.32 1409.97 280.74 C1417.05 286.16 1423.91 291.46 1430.22 296.31 C1436.53 301.15 1442.32 305.57 1447.84 309.79 C1453.36 314.02 1458.61 318.04 1463.33 321.65 C1468.06 325.25 1472.31 328.46 1476.20 331.43 C1480.09 334.39 1483.52 337.05 1486.65 339.46 C1489.78 341.87 1492.49 343.96 1494.99 345.87 C1497.48 347.78 1499.64 349.40 1501.64 350.92 C1503.64 352.45 1505.34 353.77 1506.97 355.03 C1508.61 356.28 1510.08 357.41 1511.43 358.45 C1512.79 359.49 1513.99 360.43 1515.09 361.26 C1516.19 362.10 1517.16 362.81 1518.01 363.45 C1518.87 364.10 1519.56 364.64 1520.21 365.14 C1520.85 365.64 1521.40 366.06 1521.89 366.43 C1522.37 366.81 1522.79 367.12 1523.13 367.39 C1523.47 367.65 1523.69 367.82 1523.93 368.01 C1524.18 368.19 1524.40 368.36 1524.59 368.51 C1524.79 368.66 1524.93 368.77 1525.10 368.90 C1525.27 369.04 1525.41 369.14 1525.62 369.30 C1525.82 369.46 1526.19 369.74 1526.35 369.86 C1526.50 369.98 1526.53 370.00 1526.57 370.03 Z" fill="url(#fbg)"/><path d="M1116.77 516.29 C1116.75 516.29 1116.73 516.28 1116.69 516.29 C1116.66 516.30 1116.60 516.34 1116.55 516.35 C1116.50 516.36 1116.46 516.34 1116.40 516.35 C1116.34 516.36 1116.26 516.39 1116.18 516.40 C1116.11 516.41 1116.05 516.40 1115.96 516.40 C1115.88 516.40 1115.78 516.40 1115.67 516.40 C1115.56 516.40 1115.45 516.43 1115.31 516.40 C1115.16 516.37 1115.01 516.33 1114.79 516.23 C1114.57 516.14 1114.29 516.01 1113.99 515.84 C1113.68 515.67 1113.38 515.49 1112.97 515.22 C1112.55 514.96 1112.05 514.64 1111.50 514.27 C1110.96 513.89 1110.38 513.46 1109.68 512.98 C1108.97 512.49 1108.21 511.98 1107.26 511.35 C1106.31 510.71 1105.21 509.99 1103.97 509.15 C1102.74 508.32 1101.42 507.47 1099.88 506.34 C1098.35 505.22 1096.65 504.02 1094.76 502.41 C1092.88 500.80 1090.97 499.31 1088.55 496.68 C1086.13 494.05 1083.37 491.01 1080.22 486.62 C1077.06 482.23 1073.61 477.34 1069.62 470.33 C1065.62 463.31 1061.22 455.20 1056.24 444.54 C1051.26 433.87 1045.31 421.53 1039.72 406.33 C1034.13 391.13 1028.19 373.19 1022.69 353.34 C1017.18 333.49 1011.21 310.00 1006.68 287.20 C1002.15 264.41 997.88 239.25 995.49 216.57 C993.11 193.90 991.66 171.00 992.35 151.17 C993.05 131.33 995.40 112.28 999.66 97.56 C1003.93 82.84 1010.58 70.67 1017.94 62.84 C1025.29 55.01 1034.64 51.92 1043.81 50.59 C1052.99 49.26 1063.18 52.25 1072.98 54.86 C1082.78 57.47 1093.00 62.09 1102.59 66.26 C1112.17 70.44 1121.38 75.09 1130.51 79.92 C1139.64 84.75 1148.46 89.89 1157.34 95.26 C1166.22 100.62 1175.03 106.31 1183.80 112.12 C1192.57 117.92 1201.26 123.97 1209.97 130.10 C1218.68 136.22 1227.36 142.51 1236.07 148.86 C1244.78 155.21 1253.54 161.70 1262.24 168.19 C1270.94 174.68 1279.61 181.27 1288.26 187.80 C1296.91 194.34 1305.60 200.91 1314.14 207.41 C1322.68 213.91 1331.17 220.42 1339.50 226.80 C1347.84 233.18 1356.10 239.52 1364.14 245.68 C1372.18 251.84 1380.11 257.93 1387.75 263.77 C1395.39 269.62 1402.89 275.32 1409.97 280.74 C1417.05 286.16 1423.91 291.46 1430.22 296.31 C1436.53 301.15 1442.32 305.57 1447.84 309.79 C1453.36 314.02 1458.61 318.04 1463.33 321.65 C1468.06 325.25 1472.31 328.46 1476.20 331.43 C1480.09 334.39 1483.52 337.05 1486.65 339.46 C1489.78 341.87 1492.49 343.96 1494.99 345.87 C1497.48 347.78 1499.64 349.40 1501.64 350.92 C1503.64 352.45 1505.34 353.77 1506.97 355.03 C1508.61 356.28 1510.08 357.41 1511.43 358.45 C1512.79 359.49 1513.99 360.43 1515.09 361.26 C1516.19 362.10 1517.16 362.81 1518.01 363.45 C1518.87 364.10 1519.56 364.64 1520.21 365.14 C1520.85 365.64 1521.40 366.06 1521.89 366.43 C1522.37 366.81 1522.79 367.12 1523.13 367.39 C1523.47 367.65 1523.69 367.82 1523.93 368.01 C1524.18 368.19 1524.40 368.36 1524.59 368.51 C1524.79 368.66 1524.93 368.77 1525.10 368.90 C1525.27 369.04 1525.41 369.14 1525.62 369.30 C1525.82 369.46 1526.19 369.74 1526.35 369.86 C1526.50 369.98 1526.53 370.00 1526.57 370.03 Z" fill="url(#fbr)"/><path d="M1457.3 333.7 L1208.8 182.0 L1099.2 485.4 Z" fill="#ffffff"/><path d="M1457.3 333.7 L1208.8 182.0 L1099.2 485.4 Z" fill="url(#ftg)"/><path d="M1457.3 333.7 L1208.8 182.0 L1099.2 485.4 Z" fill="url(#ftb)"/><path d="M1457.3 333.7 L1208.8 182.0 L1099.2 485.4 Z" fill="url(#ftr)"/></g>
</svg>
<canvas id="cie" width="616" height="473" style="left:989px;top:47px;width:616px;height:473px;z-index:1"></canvas>
<svg width="1616" height="789" viewBox="0 0 1616 789" style="z-index:2">
<rect x="1206.4" y="236.5" width="13" height="13" fill="none" stroke="#ffffff" stroke-width="1.6"/>
<rect x="1258.0" y="234.8" width="13" height="13" fill="none" stroke="#ffffff" stroke-width="1.6"/>
<rect x="1309.1" y="245.9" width="13" height="13" fill="none" stroke="#ffffff" stroke-width="1.6"/>
<rect x="1328.9" y="265.4" width="13" height="13" fill="none" stroke="#ffffff" stroke-width="1.6"/>
<rect x="1357.9" y="283.9" width="13" height="13" fill="none" stroke="#ffffff" stroke-width="1.6"/>
<rect x="1231.5" y="272.0" width="13" height="13" fill="none" stroke="#ffffff" stroke-width="1.6"/>
<rect x="1174.5" y="309.4" width="13" height="13" fill="none" stroke="#ffffff" stroke-width="1.6"/>
<rect x="1260.6" y="311.9" width="13" height="13" fill="none" stroke="#ffffff" stroke-width="1.6"/>
<rect x="1275.1" y="307.9" width="13" height="13" fill="none" stroke="#ffffff" stroke-width="1.6"/>
<rect x="1256.4" y="372.9" width="13" height="13" fill="none" stroke="#ffffff" stroke-width="1.6"/>
<rect x="1321.0" y="335.9" width="13" height="13" fill="none" stroke="#ffffff" stroke-width="1.6"/>
<rect x="1375.1" y="332.9" width="13" height="13" fill="none" stroke="#ffffff" stroke-width="1.6"/>
<rect x="1135.0" y="360.9" width="13" height="13" fill="none" stroke="#ffffff" stroke-width="1.6"/>
<rect x="1165.6" y="361.9" width="13" height="13" fill="none" stroke="#ffffff" stroke-width="1.6"/>
<rect x="1178.6" y="370.0" width="13" height="13" fill="none" stroke="#ffffff" stroke-width="1.6"/>
<rect x="1194.5" y="387.5" width="13" height="13" fill="none" stroke="#ffffff" stroke-width="1.6"/>
<rect x="1141.5" y="404.4" width="13" height="13" fill="none" stroke="#ffffff" stroke-width="1.6"/>
<rect x="1123.0" y="432.2" width="13" height="13" fill="none" stroke="#ffffff" stroke-width="1.6"/>
<rect x="1212.1" y="326.9" width="12" height="12" fill="none" stroke="#000" stroke-width="2.6"/>
<circle cx="1218" cy="240.4" r="4.0" fill="#4f9a52" stroke="#151515" stroke-width="1.2"/>
<circle cx="1269.4" cy="234.9" r="4.0" fill="#a6bb50" stroke="#151515" stroke-width="1.2"/>
<circle cx="1318.4" cy="240.4" r="4.0" fill="#e6bf33" stroke="#151515" stroke-width="1.2"/>
<circle cx="1334.4" cy="260.4" r="4.0" fill="#e0a33a" stroke="#151515" stroke-width="1.2"/>
<circle cx="1357.8" cy="277.1" r="4.0" fill="#d1803a" stroke="#151515" stroke-width="1.2"/>
<circle cx="1240.4" cy="274.5" r="4.0" fill="#5a6848" stroke="#151515" stroke-width="1.2"/>
<circle cx="1184.8" cy="318.4" r="4.0" fill="#6ab4a0" stroke="#151515" stroke-width="1.2"/>
<circle cx="1260.4" cy="318.4" r="4.0" fill="#c49a86" stroke="#151515" stroke-width="1.2"/>
<circle cx="1278.5" cy="310.5" r="4.0" fill="#6e5046" stroke="#151515" stroke-width="1.2"/>
<circle cx="1250.9" cy="380.3" r="4.0" fill="#c05a96" stroke="#151515" stroke-width="1.2"/>
<circle cx="1311.3" cy="342.4" r="4.0" fill="#c05a64" stroke="#151515" stroke-width="1.2"/>
<circle cx="1373.4" cy="338.5" r="4.0" fill="#aa3440" stroke="#151515" stroke-width="1.2"/>
<circle cx="1146.5" cy="367.4" r="4.0" fill="#1a8496" stroke="#151515" stroke-width="1.2"/>
<circle cx="1174.3" cy="368.1" r="4.0" fill="#647896" stroke="#151515" stroke-width="1.2"/>
<circle cx="1187.5" cy="375.4" r="4.0" fill="#8282aa" stroke="#151515" stroke-width="1.2"/>
<circle cx="1198.5" cy="396.2" r="4.0" fill="#5a3c64" stroke="#151515" stroke-width="1.2"/>
<circle cx="1151.8" cy="409.3" r="4.0" fill="#505aa0" stroke="#151515" stroke-width="1.2"/>
<circle cx="1132.3" cy="440.2" r="4.0" fill="#3c3c8c" stroke="#151515" stroke-width="1.2"/>
<circle cx="1203.5" cy="342.4" r="4.8" fill="#000"/>
<circle cx="1213.7" cy="338.5" r="4.0" fill="#fff" stroke="#151515" stroke-width="1.2"/>
<circle cx="1216.4" cy="334.4" r="4.0" fill="#a0a0a0" stroke="#151515" stroke-width="1.2"/>
<rect x="1416" y="50.5" width="185" height="146" fill="#1e1e1e"/>
<rect x="1419.5" y="54.5" width="179" height="139" fill="#00608c" stroke="#a0a0a0" stroke-width="1"/>
<path id="fbi" d="M1533.4 55 L1598 55 L1598 193 L1484.4 193 Z" fill="#1aa0ff"/>
</svg>
<canvas id="ins" width="178" height="138" style="left:1420px;top:55px;width:178px;height:138px;z-index:3"></canvas>
<svg width="1616" height="789" viewBox="0 0 1616 789" style="z-index:4">
<rect x="1419.5" y="54.5" width="179" height="139" fill="none" stroke="#a0a0a0" stroke-width="1"/>
<rect x="1501.5" y="116.5" width="12.5" height="12.5" fill="none" stroke="#fff" stroke-width="2"/>
<circle cx="1533.4" cy="125.3" r="4.0" fill="#1a8496" stroke="#151515" stroke-width="1.2"/>
<rect x="1337" y="481" width="264" height="26" fill="#333333"/>
<text x="1366.3" y="501" font-size="19.2" text-anchor="start" fill="#f4f4f4" textLength="204.5" lengthAdjust="spacingAndGlyphs">RGB Triplet: 0, 133, 163</text>
<path d="M989.5 47.5 H1604.5 V519.5 H989.5 Z" fill="none" stroke="#9a9a9a" stroke-width="1"/>
<line x1="984" y1="519.5" x2="989.5" y2="519.5" stroke="#e0e0e0" stroke-width="1.3"/>
<text x="983.5" y="524.7" font-size="14" text-anchor="end" fill="#f2f2f2">0</text>
<line x1="989.5" y1="519.5" x2="989.5" y2="525" stroke="#e0e0e0" stroke-width="1.3"/>
<text x="989.5" y="540" font-size="14" text-anchor="middle" fill="#f2f2f2">0</text>
<line x1="984" y1="463.5" x2="989.5" y2="463.5" stroke="#e0e0e0" stroke-width="1.3"/>
<text x="983.5" y="468.7" font-size="14" text-anchor="end" fill="#f2f2f2">0,1</text>
<line x1="1062.5" y1="519.5" x2="1062.5" y2="525" stroke="#e0e0e0" stroke-width="1.3"/>
<text x="1062.5" y="540" font-size="14" text-anchor="middle" fill="#f2f2f2">0,1</text>
<line x1="984" y1="407.5" x2="989.5" y2="407.5" stroke="#e0e0e0" stroke-width="1.3"/>
<text x="983.5" y="412.7" font-size="14" text-anchor="end" fill="#f2f2f2">0,2</text>
<line x1="1135.5" y1="519.5" x2="1135.5" y2="525" stroke="#e0e0e0" stroke-width="1.3"/>
<text x="1135.5" y="540" font-size="14" text-anchor="middle" fill="#f2f2f2">0,2</text>
<line x1="984" y1="351.5" x2="989.5" y2="351.5" stroke="#e0e0e0" stroke-width="1.3"/>
<text x="983.5" y="356.7" font-size="14" text-anchor="end" fill="#f2f2f2">0,3</text>
<line x1="1208.5" y1="519.5" x2="1208.5" y2="525" stroke="#e0e0e0" stroke-width="1.3"/>
<text x="1208.5" y="540" font-size="14" text-anchor="middle" fill="#f2f2f2">0,3</text>
<line x1="984" y1="295.5" x2="989.5" y2="295.5" stroke="#e0e0e0" stroke-width="1.3"/>
<text x="983.5" y="300.7" font-size="14" text-anchor="end" fill="#f2f2f2">0,4</text>
<line x1="1281.5" y1="519.5" x2="1281.5" y2="525" stroke="#e0e0e0" stroke-width="1.3"/>
<text x="1281.5" y="540" font-size="14" text-anchor="middle" fill="#f2f2f2">0,4</text>
<line x1="984" y1="239.5" x2="989.5" y2="239.5" stroke="#e0e0e0" stroke-width="1.3"/>
<text x="983.5" y="244.7" font-size="14" text-anchor="end" fill="#f2f2f2">0,5</text>
<line x1="1355.5" y1="519.5" x2="1355.5" y2="525" stroke="#e0e0e0" stroke-width="1.3"/>
<text x="1355.5" y="540" font-size="14" text-anchor="middle" fill="#f2f2f2">0,5</text>
<line x1="984" y1="183.5" x2="989.5" y2="183.5" stroke="#e0e0e0" stroke-width="1.3"/>
<text x="983.5" y="188.7" font-size="14" text-anchor="end" fill="#f2f2f2">0,6</text>
<line x1="1428.5" y1="519.5" x2="1428.5" y2="525" stroke="#e0e0e0" stroke-width="1.3"/>
<text x="1428.5" y="540" font-size="14" text-anchor="middle" fill="#f2f2f2">0,6</text>
<line x1="984" y1="127.5" x2="989.5" y2="127.5" stroke="#e0e0e0" stroke-width="1.3"/>
<text x="983.5" y="132.7" font-size="14" text-anchor="end" fill="#f2f2f2">0,7</text>
<line x1="1501.5" y1="519.5" x2="1501.5" y2="525" stroke="#e0e0e0" stroke-width="1.3"/>
<text x="1501.5" y="540" font-size="14" text-anchor="middle" fill="#f2f2f2">0,7</text>
<line x1="984" y1="71.5" x2="989.5" y2="71.5" stroke="#e0e0e0" stroke-width="1.3"/>
<text x="983.5" y="76.7" font-size="14" text-anchor="end" fill="#f2f2f2">0,8</text>
<line x1="1574.5" y1="519.5" x2="1574.5" y2="525" stroke="#e0e0e0" stroke-width="1.3"/>
<text x="1574.5" y="540" font-size="14" text-anchor="middle" fill="#f2f2f2">0,8</text>
</svg>
<script>
(function(){
var L=[[0.1741,0.005],[0.174,0.005],[0.1738,0.0049],[0.1736,0.0049],[0.1733,0.0048],[0.173,0.0048],[0.1726,0.0048],[0.1721,0.0048],[0.1714,0.0051],[0.1703,0.0058],[0.1689,0.0069],[0.1669,0.0086],[0.1644,0.0109],[0.1611,0.0138],[0.1566,0.0177],[0.151,0.0227],[0.144,0.0297],[0.1355,0.0399],[0.1241,0.0578],[0.1096,0.0868],[0.0913,0.1327],[0.0687,0.2007],[0.0454,0.295],[0.0235,0.4127],[0.0082,0.5384],[0.0039,0.6548],[0.0139,0.7502],[0.0389,0.812],[0.0743,0.8338],[0.1142,0.8262],[0.1547,0.8059],[0.1929,0.7816],[0.2296,0.7543],[0.2658,0.7243],[0.3016,0.6923],[0.3373,0.6589],[0.3731,0.6245],[0.4087,0.5896],[0.4441,0.5547],[0.4788,0.5202],[0.5125,0.4866],[0.5448,0.4544],[0.5752,0.4242],[0.6029,0.3965],[0.627,0.3725],[0.6482,0.3514],[0.6658,0.334],[0.6801,0.3197],[0.6915,0.3083],[0.7006,0.2993],[0.7079,0.292],[0.714,0.2859],[0.719,0.2809],[0.723,0.277],[0.726,0.274],[0.7283,0.2717],[0.73,0.27],[0.7311,0.2689],[0.732,0.268],[0.7327,0.2673],[0.7334,0.2666],[0.7344,0.2656],[0.7347,0.2653]];
var X0=989.5,XS=731.0,Y0=519.1,YS=561.9;
function col(x,y,d,o){
  var X=x/y,Z=(1-x-y)/y;
  var r=3.2406*X-1.5372-0.4986*Z, g=-0.9689*X+1.8758+0.0415*Z, b=0.0557*X-0.2040+1.0570*Z;
  var k=1; if(r<0||g<0||b<0){k=0.6; if(r<0)r=0; if(g<0)g=0; if(b<0)b=0;}
  var m=Math.max(r,g,b); if(m<=0)m=1; k=k*255/m;
  d[o]=r*k; d[o+1]=g*k; d[o+2]=b*k; d[o+3]=255;
}
var c=document.getElementById('cie'), ctx=c.getContext('2d');
var W=c.width,H=c.height, im=ctx.createImageData(W,H), d=im.data;
var t=[0,0,0,0];
for(var j=0;j<H;j++){ for(var i=0;i<W;i++){ var o=(j*W+i)*4, R=0,G=0,B=0;
  for(var sj=0;sj<2;sj++) for(var si=0;si<2;si++){ var py=47+j+0.25+0.5*sj, px=989+i+0.25+0.5*si; col((px-X0)/XS, Math.max((Y0-py)/YS,0.001), t, 0); R+=t[0];G+=t[1];B+=t[2]; }
  d[o]=R/4; d[o+1]=G/4; d[o+2]=B/4; d[o+3]=255; } }
ctx.putImageData(im,0,0);
ctx.globalCompositeOperation='destination-in';
ctx.translate(-989,-47); ctx.fill(new Path2D("M1116.77 516.29 C1116.75 516.29 1116.73 516.28 1116.69 516.29 C1116.66 516.30 1116.60 516.34 1116.55 516.35 C1116.50 516.36 1116.46 516.34 1116.40 516.35 C1116.34 516.36 1116.26 516.39 1116.18 516.40 C1116.11 516.41 1116.05 516.40 1115.96 516.40 C1115.88 516.40 1115.78 516.40 1115.67 516.40 C1115.56 516.40 1115.45 516.43 1115.31 516.40 C1115.16 516.37 1115.01 516.33 1114.79 516.23 C1114.57 516.14 1114.29 516.01 1113.99 515.84 C1113.68 515.67 1113.38 515.49 1112.97 515.22 C1112.55 514.96 1112.05 514.64 1111.50 514.27 C1110.96 513.89 1110.38 513.46 1109.68 512.98 C1108.97 512.49 1108.21 511.98 1107.26 511.35 C1106.31 510.71 1105.21 509.99 1103.97 509.15 C1102.74 508.32 1101.42 507.47 1099.88 506.34 C1098.35 505.22 1096.65 504.02 1094.76 502.41 C1092.88 500.80 1090.97 499.31 1088.55 496.68 C1086.13 494.05 1083.37 491.01 1080.22 486.62 C1077.06 482.23 1073.61 477.34 1069.62 470.33 C1065.62 463.31 1061.22 455.20 1056.24 444.54 C1051.26 433.87 1045.31 421.53 1039.72 406.33 C1034.13 391.13 1028.19 373.19 1022.69 353.34 C1017.18 333.49 1011.21 310.00 1006.68 287.20 C1002.15 264.41 997.88 239.25 995.49 216.57 C993.11 193.90 991.66 171.00 992.35 151.17 C993.05 131.33 995.40 112.28 999.66 97.56 C1003.93 82.84 1010.58 70.67 1017.94 62.84 C1025.29 55.01 1034.64 51.92 1043.81 50.59 C1052.99 49.26 1063.18 52.25 1072.98 54.86 C1082.78 57.47 1093.00 62.09 1102.59 66.26 C1112.17 70.44 1121.38 75.09 1130.51 79.92 C1139.64 84.75 1148.46 89.89 1157.34 95.26 C1166.22 100.62 1175.03 106.31 1183.80 112.12 C1192.57 117.92 1201.26 123.97 1209.97 130.10 C1218.68 136.22 1227.36 142.51 1236.07 148.86 C1244.78 155.21 1253.54 161.70 1262.24 168.19 C1270.94 174.68 1279.61 181.27 1288.26 187.80 C1296.91 194.34 1305.60 200.91 1314.14 207.41 C1322.68 213.91 1331.17 220.42 1339.50 226.80 C1347.84 233.18 1356.10 239.52 1364.14 245.68 C1372.18 251.84 1380.11 257.93 1387.75 263.77 C1395.39 269.62 1402.89 275.32 1409.97 280.74 C1417.05 286.16 1423.91 291.46 1430.22 296.31 C1436.53 301.15 1442.32 305.57 1447.84 309.79 C1453.36 314.02 1458.61 318.04 1463.33 321.65 C1468.06 325.25 1472.31 328.46 1476.20 331.43 C1480.09 334.39 1483.52 337.05 1486.65 339.46 C1489.78 341.87 1492.49 343.96 1494.99 345.87 C1497.48 347.78 1499.64 349.40 1501.64 350.92 C1503.64 352.45 1505.34 353.77 1506.97 355.03 C1508.61 356.28 1510.08 357.41 1511.43 358.45 C1512.79 359.49 1513.99 360.43 1515.09 361.26 C1516.19 362.10 1517.16 362.81 1518.01 363.45 C1518.87 364.10 1519.56 364.64 1520.21 365.14 C1520.85 365.64 1521.40 366.06 1521.89 366.43 C1522.37 366.81 1522.79 367.12 1523.13 367.39 C1523.47 367.65 1523.69 367.82 1523.93 368.01 C1524.18 368.19 1524.40 368.36 1524.59 368.51 C1524.79 368.66 1524.93 368.77 1525.10 368.90 C1525.27 369.04 1525.41 369.14 1525.62 369.30 C1525.82 369.46 1526.19 369.74 1526.35 369.86 C1526.50 369.98 1526.53 370.00 1526.57 370.03 Z"));
var fb=document.getElementById('fb'); if(fb) fb.parentNode.removeChild(fb);
var c2=document.getElementById('ins'), ctx2=c2.getContext('2d');
var W2=c2.width,H2=c2.height, im2=ctx2.createImageData(W2,H2), d2=im2.data;
var ICX=1509, ICY=123.75, CMY=367.4, ZF=5; var CMX=X0+XS*(0.30+(0.15-0.30)*((Y0-CMY)/YS-0.60)/(0.06-0.60));
for(var j=0;j<H2;j++){ for(var i=0;i<W2;i++){ var o=(j*W2+i)*4, R=0,G=0,B=0;
  for(var sj=0;sj<2;sj++) for(var si=0;si<2;si++){ var py=55+j+0.25+0.5*sj, px=1420+i+0.25+0.5*si; var my=CMY+(py-ICY)/ZF, mx=CMX+(px-ICX)/ZF; col((mx-X0)/XS,(Y0-my)/YS,t,0); R+=t[0];G+=t[1];B+=t[2]; }
  d2[o]=R/4; d2[o+1]=G/4; d2[o+2]=B/4; d2[o+3]=255; } }
ctx2.putImageData(im2,0,0);
var fbi=document.getElementById('fbi'); if(fbi) fbi.parentNode.removeChild(fbi);
})();
</script>
</body></html>
